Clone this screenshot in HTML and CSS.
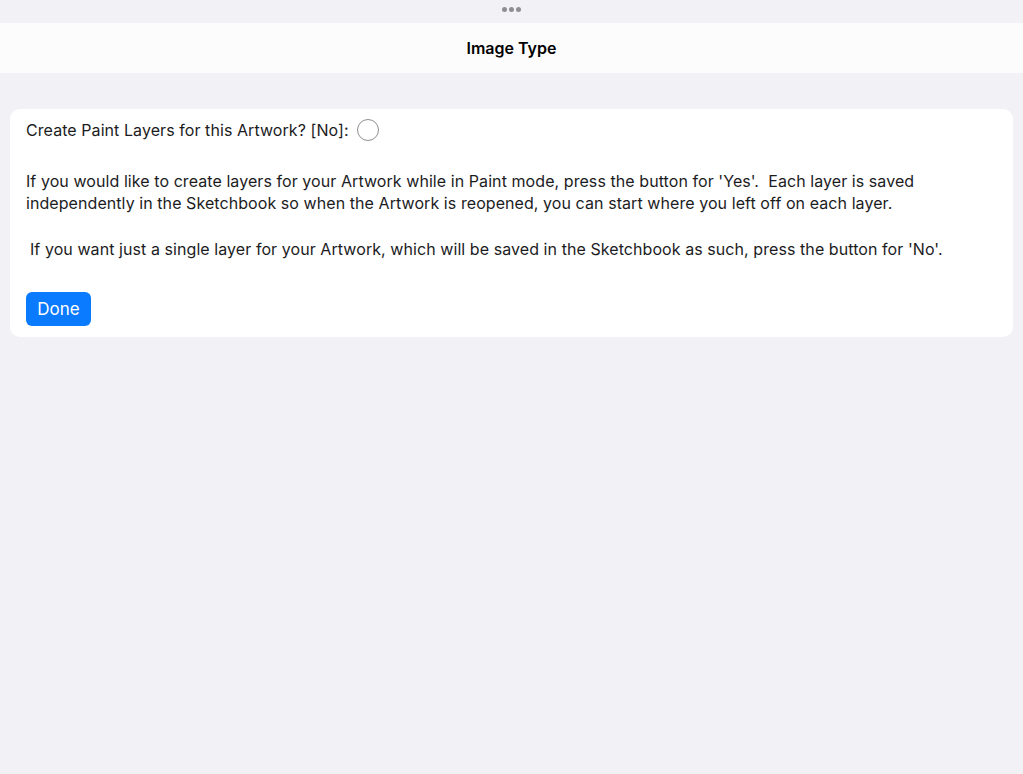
FILE: index.html
```html
<!DOCTYPE html>
<html>
<head>
<meta charset="utf-8">
<link rel="stylesheet" href="styles.css">
</head>
<body>
<div class="grabber"><span></span><span></span><span></span></div>
<header class="navbar"><h1>Image Type</h1></header>
<main class="content">
  <section class="card">
    <div class="row">
      <span>Create Paint Layers for this Artwork? [No]:</span>
      <span class="radio"></span>
    </div>
    <p class="para">If you would like to create layers for your Artwork while in Paint mode, press the button for 'Yes'.&nbsp; Each layer is saved independently in the Sketchbook so when the Artwork is reopened, you can start where you left off on each layer.</p>
    <p class="para indent">If you want just a single layer for your Artwork, which will be saved in the Sketchbook as such, press the button for 'No'.</p>
    <button class="done">Done</button>
  </section>
</main>
</body>
</html>
```
FILE: styles.css
```css
html, body {
  margin: 0;
  padding: 0;
  background: #f2f1f6;
  font-family: Inter, "Liberation Sans", sans-serif;
  color: #1c1c1e;
}
.grabber {
  height: 23px;
  display: flex;
  justify-content: center;
  align-items: center;
  gap: 2px;
  padding-bottom: 4px;
  box-sizing: border-box;
}
.grabber span {
  width: 5px;
  height: 5px;
  border-radius: 50%;
  background: #8e8e93;
}
.navbar {
  height: 50px;
  background: #fcfcfc;
  display: flex;
  align-items: center;
  justify-content: center;
}
.navbar h1 {
  margin: 0;
  font-size: 16px;
  font-weight: 600;
  color: #000;
}
.content {
  padding: 36px 10px 0 10px;
}
.card {
  background: #fff;
  border-radius: 10px;
  padding: 10px 16px 11px 16px;
  letter-spacing: 0.07px;
}
.row {
  display: flex;
  align-items: center;
  gap: 8px;
  font-size: 16px;
  height: 22px;
}
.radio {
  width: 22px;
  height: 22px;
  border: 1px solid #8e8e93;
  border-radius: 50%;
  box-sizing: border-box;
}
.para {
  margin: 29px 0 0 0;
  font-size: 16px;
  line-height: 22px;
}
.para + .para { margin-top: 24px; }
.indent { padding-left: 4px; }
.done {
  margin-top: 32px;
  display: block;
  width: 65px;
  height: 34px;
  border: none;
  border-radius: 6px;
  background: #0a7aff;
  color: #fff;
  font-family: inherit;
  font-size: 17px;
  letter-spacing: 0;
}
```
